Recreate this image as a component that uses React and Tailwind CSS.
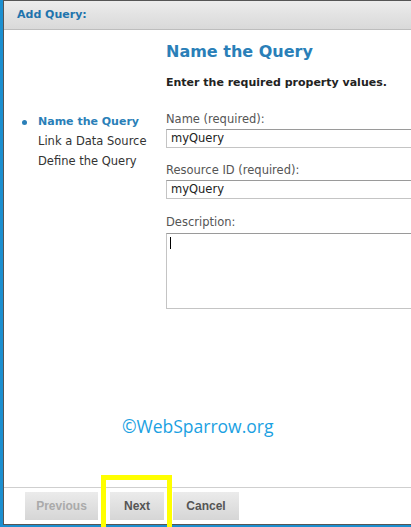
import React from "react";

const navItems = [
  { label: "Name the Query", active: true },
  { label: "Link a Data Source" },
  { label: "Define the Query" },
];

const Field = ({ label, value, top }) => (
  <div className={top}>
    <div className="text-[11.5px] leading-[16px] text-[#555]">{label}</div>
    <div className="mt-[2px] w-[260px] h-[19px] border border-[#c4c4c4] border-t-[#9a9a9a] bg-white pl-[4px] text-[11.5px] leading-[16px] text-[#222]">
      {value}
    </div>
  </div>
);

const Btn = ({ children, disabled, className }) => (
  <div
    className={
      "h-[28px] flex items-center justify-center bg-gradient-to-b from-[#ebebeb] to-[#d6d6d6] font-bold text-[12px] " +
      (disabled ? "text-[#aaa] " : "text-[#555] ") +
      className
    }
    style={{ fontFamily: '"Liberation Sans", Arial, sans-serif' }}
  >
    {children}
  </div>
);

export default function App() {
  return (
    <div
      className="relative w-[411px] h-[527px] bg-[#1b8fd0] overflow-hidden"
      style={{ fontFamily: '"DejaVu Sans", Verdana, sans-serif' }}
    >
      <div className="ml-[3px] h-[525px] border-l border-t border-b border-[#555] bg-white flex flex-col overflow-hidden">
        {/* header */}
        <div className="h-[29px] shrink-0 border-b border-[#bdbdbd] bg-gradient-to-b from-[#ececec] to-[#d9d9d9] flex items-center pl-[13px]">
          <span className="text-[11px] font-bold text-[#1f74ad]">Add Query:</span>
        </div>

        {/* body */}
        <div className="flex-1 flex flex-col">
          <div className="flex">
            <div className="w-[162px] shrink-0 pt-[82px] pl-[18px]">
              {navItems.map((it) => (
                <div key={it.label} className="flex items-center h-[20px]">
                  <span className="w-[16px] flex">
                    {it.active && <span className="w-[5px] h-[5px] rounded-full bg-[#2a7fb8]" />}
                  </span>
                  <span
                    className={
                      it.active ? "text-[11px] font-bold text-[#2a7fb8]" : "text-[11.5px] text-[#333]"
                    }
                  >
                    {it.label}
                  </span>
                </div>
              ))}
            </div>

            <div className="pt-[12px]">
              <div className="text-[16px] leading-[20px] font-bold text-[#2a7fb8]">Name the Query</div>
              <div className="mt-[13px] text-[11px] leading-[16px] font-bold text-[#222]">
                Enter the required property values.
              </div>
              <Field label="Name (required):" value="myQuery" top="mt-[20px]" />
              <Field label="Resource ID (required):" value="myQuery" top="mt-[14px]" />
              <div className="mt-[15px]">
                <div className="text-[11.5px] leading-[16px] text-[#555]">Description:</div>
                <div className="mt-[3px] w-[260px] h-[76px] border border-[#c4c4c4] border-t-[#9a9a9a] bg-white pl-[3px] pt-[3px]">
                  <div className="w-[1px] h-[12px] bg-black" />
                </div>
              </div>
            </div>
          </div>

          <div
            className="mt-[106px] pl-[118px] text-[17.5px] leading-[22px] text-[#1ba1e2]"
            style={{ fontFamily: '"Open Sans", sans-serif' }}
          >
            ©WebSparrow.org
          </div>
        </div>

        {/* footer */}
        <div className="h-[37px] shrink-0 border-t border-[#cfcfcf] flex items-center pl-[21px]">
          <Btn disabled className="w-[73px]">Previous</Btn>
          <Btn className="w-[54px] ml-[12px]">Next</Btn>
          <Btn className="w-[66px] ml-[9px]">Cancel</Btn>
        </div>
      </div>

      {/* highlight box */}
      <div className="absolute left-[101px] top-[475px] w-[71px] h-[60px] border-[5px] border-[#ffff00]" />
    </div>
  );
}
